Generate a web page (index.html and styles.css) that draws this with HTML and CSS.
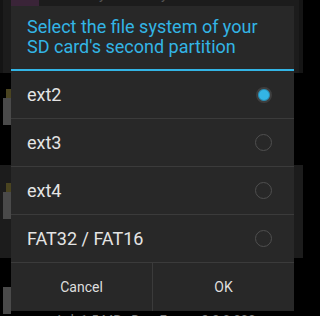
FILE: index.html
```html
<!DOCTYPE html>
<html>
<head>
<meta charset="utf-8">
<link rel="stylesheet" href="styles.css">
</head>
<body>
<div class="screen">
  <div class="list">
    <div class="item item-grey first">
      <div class="thumb"></div>
      <span class="peek">your library</span>
    </div>
    <div class="item item-black">
      <div class="pkg pkg-a"><div class="pkg-top"></div><div class="pkg-body"></div></div>
    </div>
    <div class="item item-grey">
      <div class="pkg pkg-b"><div class="pkg-top"></div><div class="pkg-body"></div></div>
    </div>
    <div class="item item-black last">
      <div class="pkg pkg-c"><div class="pkg-body"></div></div>
      <span class="meta">Apk 1.5 MB · Dex: Froyo · 2.2.0.000</span>
    </div>
  </div>

  <div class="dialog">
    <div class="title">Select the file system of your SD card's second partition</div>
    <div class="rule"></div>
    <ul class="options">
      <li class="option"><span class="label">ext2</span><span class="radio on"></span></li>
      <li class="option"><span class="label">ext3</span><span class="radio"></span></li>
      <li class="option"><span class="label">ext4</span><span class="radio"></span></li>
      <li class="option"><span class="label">FAT32 / FAT16</span><span class="radio"></span></li>
    </ul>
    <div class="buttons">
      <div class="btn">Cancel</div>
      <div class="btn">OK</div>
    </div>
  </div>
</div>
</body>
</html>
```

FILE: styles.css
```css
html, body {
  margin: 0;
  padding: 0;
  background: #000;
}

.screen {
  position: relative;
  width: 303px;
  height: 316px;
  overflow: hidden;
  font-family: Roboto, "Noto Sans", sans-serif;
  background: #000;
}

.list {
  display: flex;
  flex-direction: column;
}

.item {
  position: relative;
  display: flex;
}

.item-grey { background: #1c1c1c; }
.item-black { background: #000; }

.first {
  height: 73px;
  border-right: 4px solid #151515;
  box-sizing: border-box;
  border-left: 3px solid #141414;
}

.item-black:nth-child(2) { height: 92px; }
.item-grey:nth-child(3) { height: 93px; }
.last { height: 58px; }

.thumb {
  width: 28px;
  height: 8px;
  margin-left: 8px;
  background: #3a2438;
}

.peek {
  margin-left: 60px;
  margin-top: -14px;
  font-size: 14px;
  color: #555;
}

.pkg {
  display: flex;
  flex-direction: column;
  align-items: flex-end;
  width: 11px;
}

.pkg-a { margin-top: 16px; }
.pkg-b { margin-top: 18px; }
.pkg-c { margin-top: 29px; }

.pkg-top {
  width: 5px;
  height: 9px;
  background: #4a4420;
}

.pkg-body {
  width: 8px;
  height: 27px;
  background: #4a4a4a;
}

.meta {
  position: absolute;
  left: 55px;
  top: 54px;
  font-size: 13px;
  color: #7a7a7a;
  white-space: nowrap;
}

.dialog {
  position: absolute;
  left: 11px;
  top: 6px;
  width: 283px;
  background: #282828;
  display: flex;
  flex-direction: column;
}

.title {
  padding: 11px 22px 12px 16px;
  font-size: 18px;
  line-height: 20px;
  color: #33b5e5;
}

.rule {
  height: 2px;
  background: #33b5e5;
}

.options {
  list-style: none;
  margin: 0;
  padding: 0;
}

.option {
  display: flex;
  align-items: center;
  justify-content: space-between;
  height: 47px;
  padding: 0 22px 0 16px;
  border-top: 1px solid #3b3b3b;
}

.option:first-child {
  border-top: none;
}

.label {
  font-size: 18px;
  line-height: 20px;
  color: #e4e4e4;
}

.radio {
  width: 15px;
  height: 15px;
  border-radius: 50%;
  border: 1.3px solid #4f4f4f;
  box-sizing: content-box;
}

.radio.on {
  width: 12px;
  height: 12px;
  border: 2.5px solid #3e3e3e;
  background: #33b5e5;
  box-shadow: inset 0 0 0 1px #2a8fb6;
}

.buttons {
  display: flex;
  height: 48px;
  border-top: 1px solid #3b3b3b;
}

.btn {
  flex: 1;
  display: flex;
  align-items: center;
  justify-content: center;
  font-size: 14px;
  color: #dedede;
}

.btn + .btn {
  border-left: 1px solid #3b3b3b;
}
```
